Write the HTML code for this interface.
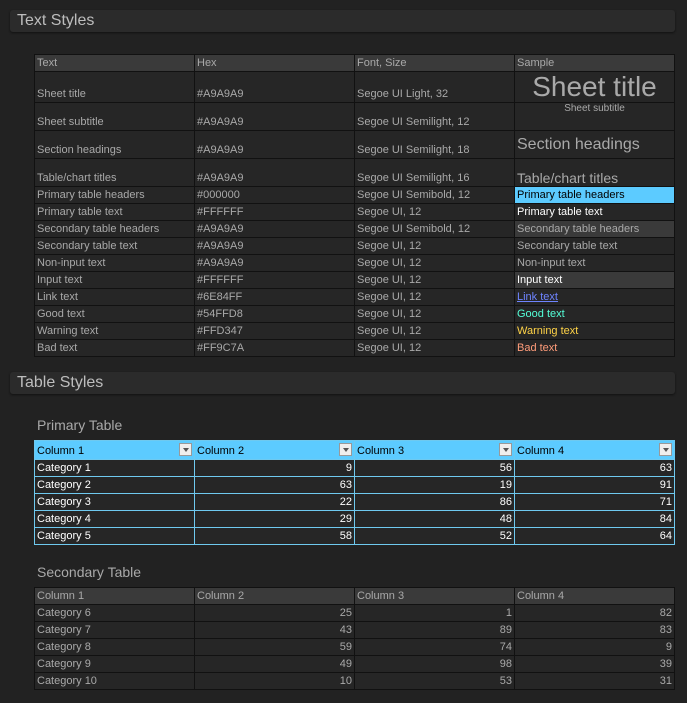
<!DOCTYPE html>
<html><head><style>
body{margin:0;width:687px;height:703px;background:#222;font-family:"Liberation Sans",sans-serif;font-size:11px;color:#a9a9a9;position:relative;overflow:hidden}
.bar{position:absolute;left:10px;width:665px;height:22px;background:#2b2b2b;border-radius:3px;box-shadow:0 1px 2px #111;font-size:16px;color:#bdbdbd;line-height:22px;padding-left:7px;box-sizing:border-box}
table{position:absolute;left:34px;border-collapse:collapse;table-layout:fixed}
td{border:1px solid #111;padding:0 2px;height:16px;line-height:16px;white-space:nowrap;overflow:hidden;background:#262626;vertical-align:bottom}
.h td{background:#3a3a3a}
.r{text-align:right}
.title{position:absolute;left:37px;font-size:14px;color:#a9a9a9}
.p td{border-color:#6fc9ef;color:#fff}
.p .h td{background:#5ccbff;color:#000;position:relative}
.dd{position:absolute;right:2px;top:2px;width:13px;height:13px;background:#eee;border:1px solid #999;box-sizing:border-box}
.dd:after{content:"";position:absolute;left:3px;top:4px;border:3px solid transparent;border-top:4px solid #555}
</style></head><body>
<div class="bar" style="top:10px">Text Styles</div>
<table style="top:54px;width:640px">
<col style="width:160px"><col style="width:160px"><col style="width:160px"><col style="width:160px">
<tr class="h"><td>Text</td><td>Hex</td><td>Font, Size</td><td>Sample</td></tr>
<tr style="height:28px"><td style="height:27px">Sheet title</td><td>#A9A9A9</td><td>Segoe UI Light, 32</td><td style="font-size:28px;text-align:center;line-height:30px;vertical-align:top">Sheet title</td></tr>
<tr><td style="height:27px">Sheet subtitle</td><td>#A9A9A9</td><td>Segoe UI Semilight, 12</td><td style="text-align:center;vertical-align:top;font-size:10px;line-height:12px">Sheet subtitle</td></tr>
<tr><td style="height:27px">Section headings</td><td>#A9A9A9</td><td>Segoe UI Semilight, 18</td><td style="font-size:16px;line-height:26px;vertical-align:middle">Section headings</td></tr>
<tr><td style="height:27px">Table/chart titles</td><td>#A9A9A9</td><td>Segoe UI Semilight, 16</td><td style="font-size:14px">Table/chart titles</td></tr>
<tr><td>Primary table headers</td><td>#000000</td><td>Segoe UI Semibold, 12</td><td style="background:#5ccbff;color:#000">Primary table headers</td></tr>
<tr><td>Primary table text</td><td>#FFFFFF</td><td>Segoe UI, 12</td><td style="color:#fff">Primary table text</td></tr>
<tr><td>Secondary table headers</td><td>#A9A9A9</td><td>Segoe UI Semibold, 12</td><td style="background:#3a3a3a">Secondary table headers</td></tr>
<tr><td>Secondary table text</td><td>#A9A9A9</td><td>Segoe UI, 12</td><td>Secondary table text</td></tr>
<tr><td>Non-input text</td><td>#A9A9A9</td><td>Segoe UI, 12</td><td>Non-input text</td></tr>
<tr><td>Input text</td><td>#FFFFFF</td><td>Segoe UI, 12</td><td style="background:#3a3a3a;color:#fff">Input text</td></tr>
<tr><td>Link text</td><td>#6E84FF</td><td>Segoe UI, 12</td><td style="color:#6e84ff;text-decoration:underline">Link text</td></tr>
<tr><td>Good text</td><td>#54FFD8</td><td>Segoe UI, 12</td><td style="color:#54ffd8">Good text</td></tr>
<tr><td>Warning text</td><td>#FFD347</td><td>Segoe UI, 12</td><td style="color:#ffd347">Warning text</td></tr>
<tr><td>Bad text</td><td>#FF9C7A</td><td>Segoe UI, 12</td><td style="color:#ff9c7a">Bad text</td></tr>
</table>
<div class="bar" style="top:372px">Table Styles</div>
<div class="title" style="top:417px">Primary Table</div>
<table class="p" style="top:440px;width:640px">
<col style="width:160px"><col style="width:160px"><col style="width:160px"><col style="width:160px">
<tr class="h"><td style="height:18px">Column 1<span class="dd"></span></td><td>Column 2<span class="dd"></span></td><td>Column 3<span class="dd"></span></td><td>Column 4<span class="dd"></span></td></tr>
<tr><td>Category 1</td><td class="r">9</td><td class="r">56</td><td class="r">63</td></tr>
<tr><td>Category 2</td><td class="r">63</td><td class="r">19</td><td class="r">91</td></tr>
<tr><td>Category 3</td><td class="r">22</td><td class="r">86</td><td class="r">71</td></tr>
<tr><td>Category 4</td><td class="r">29</td><td class="r">48</td><td class="r">84</td></tr>
<tr><td>Category 5</td><td class="r">58</td><td class="r">52</td><td class="r">64</td></tr>
</table>
<div class="title" style="top:564px">Secondary Table</div>
<table style="top:587px;width:640px">
<col style="width:160px"><col style="width:160px"><col style="width:160px"><col style="width:160px">
<tr class="h"><td>Column 1</td><td>Column 2</td><td>Column 3</td><td>Column 4</td></tr>
<tr><td>Category 6</td><td class="r">25</td><td class="r">1</td><td class="r">82</td></tr>
<tr><td>Category 7</td><td class="r">43</td><td class="r">89</td><td class="r">83</td></tr>
<tr><td>Category 8</td><td class="r">59</td><td class="r">74</td><td class="r">9</td></tr>
<tr><td>Category 9</td><td class="r">49</td><td class="r">98</td><td class="r">39</td></tr>
<tr><td>Category 10</td><td class="r">10</td><td class="r">53</td><td class="r">31</td></tr>
</table>
</body></html>
